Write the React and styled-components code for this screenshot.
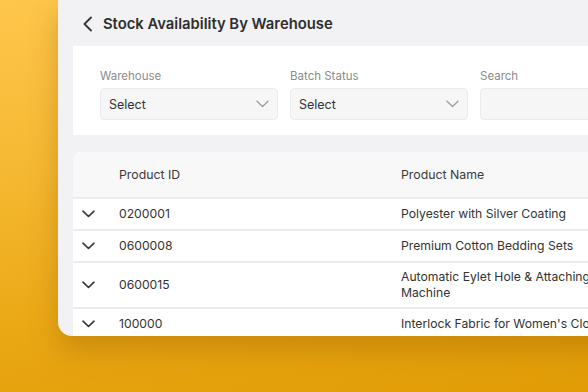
import React from "react";
import styled, { createGlobalStyle } from "styled-components";

const GlobalStyle = createGlobalStyle`
  html, body {
    margin: 0;
    padding: 0;
    overflow: hidden;
  }
  body {
    font-family: Inter, "Liberation Sans", sans-serif;
  }
`;

const Stage = styled.div`
  width: 588px;
  height: 392px;
  overflow: hidden;
  padding-left: 58px;
  box-sizing: border-box;
  background: linear-gradient(172deg, #fec64c 0%, #f6b933 35%, #eaa815 70%, #e19c05 100%);
`;

const Window = styled.div`
  width: 560px;
  height: 336px;
  background: #f2f2f4;
  border-bottom-left-radius: 14px;
  box-shadow: 0 14px 28px rgba(150, 90, 0, 0.35);
  overflow: hidden;
  display: flex;
  flex-direction: column;
`;

const Header = styled.div`
  height: 46px;
  padding-top: 1px;
  box-sizing: border-box;
  display: flex;
  align-items: center;
  gap: 9px;
  padding-left: 24px;
  flex-shrink: 0;
`;

const Title = styled.h1`
  margin: 0;
  font-size: 14.8px;
  font-weight: 600;
  color: #2e2e2e;
`;

const Body = styled.div`
  padding-left: 15px;
  display: flex;
  flex-direction: column;
  gap: 17px;
`;

const FilterCard = styled.div`
  background: #ffffff;
  height: 89px;
  box-sizing: border-box;
  padding: 22px 0 0 27px;
  display: grid;
  grid-template-columns: 178px 178px 178px;
  column-gap: 12px;
  align-content: start;
`;

const Field = styled.div`
  display: flex;
  flex-direction: column;
  gap: 4px;
`;

const Label = styled.label`
  font-size: 11.5px;
  line-height: 16px;
  color: #8c8c8c;
`;

const SelectBox = styled.div`
  height: 32px;
  box-sizing: border-box;
  border: 1px solid #ebebeb;
  border-radius: 4px;
  background: #f6f6f6;
  display: flex;
  align-items: center;
  justify-content: space-between;
  padding: 0 8px;
  font-size: 12.5px;
  color: #333;
`;

const Table = styled.div`
  border-top-left-radius: 8px;
  overflow: hidden;
  background: #ffffff;
`;

const HeadRow = styled.div`
  display: grid;
  grid-template-columns: 46px 282px 230px;
  height: 45px;
  align-items: center;
  background: #f8f8f9;
  font-size: 12.3px;
  color: #3a3a3a;
`;

const Row = styled.div`
  display: grid;
  grid-template-columns: 46px 282px 230px;
  align-items: center;
  min-height: 30px;
  padding: ${({ $tall }) => ($tall ? "6px 0" : "0")};
  box-sizing: content-box;
  border-top: 2px solid #ececee;
  font-size: 12.2px;
  line-height: 16px;
  color: #333;
  &:first-of-type {
    border-top: none;
  }
`;

const ToggleCell = styled.div`
  display: flex;
  align-items: center;
  padding-left: 9px;
`;

const Cell = styled.div`
  white-space: ${({ $wrap }) => ($wrap ? "normal" : "nowrap")};
`;

const ChevronLeft = () => (
  <svg width="12" height="16" viewBox="0 0 12 16" fill="none">
    <path d="M9 1.5L2.5 8L9 14.5" stroke="#333" strokeWidth="1.8" strokeLinecap="round" strokeLinejoin="round" />
  </svg>
);

const ChevronDown = ({ color = "#333", width = 13, stroke = 1.6 }) => (
  <svg width={width} height="8" viewBox="0 0 13 8" fill="none">
    <path d="M1 1.2L6.5 6.5L12 1.2" stroke={color} strokeWidth={stroke} strokeLinecap="round" strokeLinejoin="round" />
  </svg>
);

const rows = [
  { id: "0200001", name: "Polyester with Silver Coating" },
  { id: "0600008", name: "Premium Cotton Bedding Sets" },
  { id: "0600015", name: "Automatic Eylet Hole & Attaching Machine", tall: true },
  { id: "100000", name: "Interlock Fabric for Women's Clothing" },
];

export default function App() {
  return (
    <>
      <GlobalStyle />
      <Stage>
        <Window>
          <Header>
            <ChevronLeft />
            <Title>Stock Availability By Warehouse</Title>
          </Header>
          <Body>
            <FilterCard>
              <Field>
                <Label>Warehouse</Label>
                <SelectBox>
                  Select
                  <ChevronDown color="#9a9a9a" stroke={1.2} />
                </SelectBox>
              </Field>
              <Field>
                <Label>Batch Status</Label>
                <SelectBox>
                  Select
                  <ChevronDown color="#9a9a9a" stroke={1.2} />
                </SelectBox>
              </Field>
              <Field>
                <Label>Search</Label>
                <SelectBox />
              </Field>
            </FilterCard>
            <Table>
              <HeadRow>
                <span />
                <Cell>Product ID</Cell>
                <Cell>Product Name</Cell>
              </HeadRow>
              {rows.map((r) => (
                <Row key={r.id} $tall={r.tall}>
                  <ToggleCell>
                    <ChevronDown />
                  </ToggleCell>
                  <Cell>{r.id}</Cell>
                  <Cell $wrap>{r.name}</Cell>
                </Row>
              ))}
            </Table>
          </Body>
        </Window>
      </Stage>
    </>
  );
}
